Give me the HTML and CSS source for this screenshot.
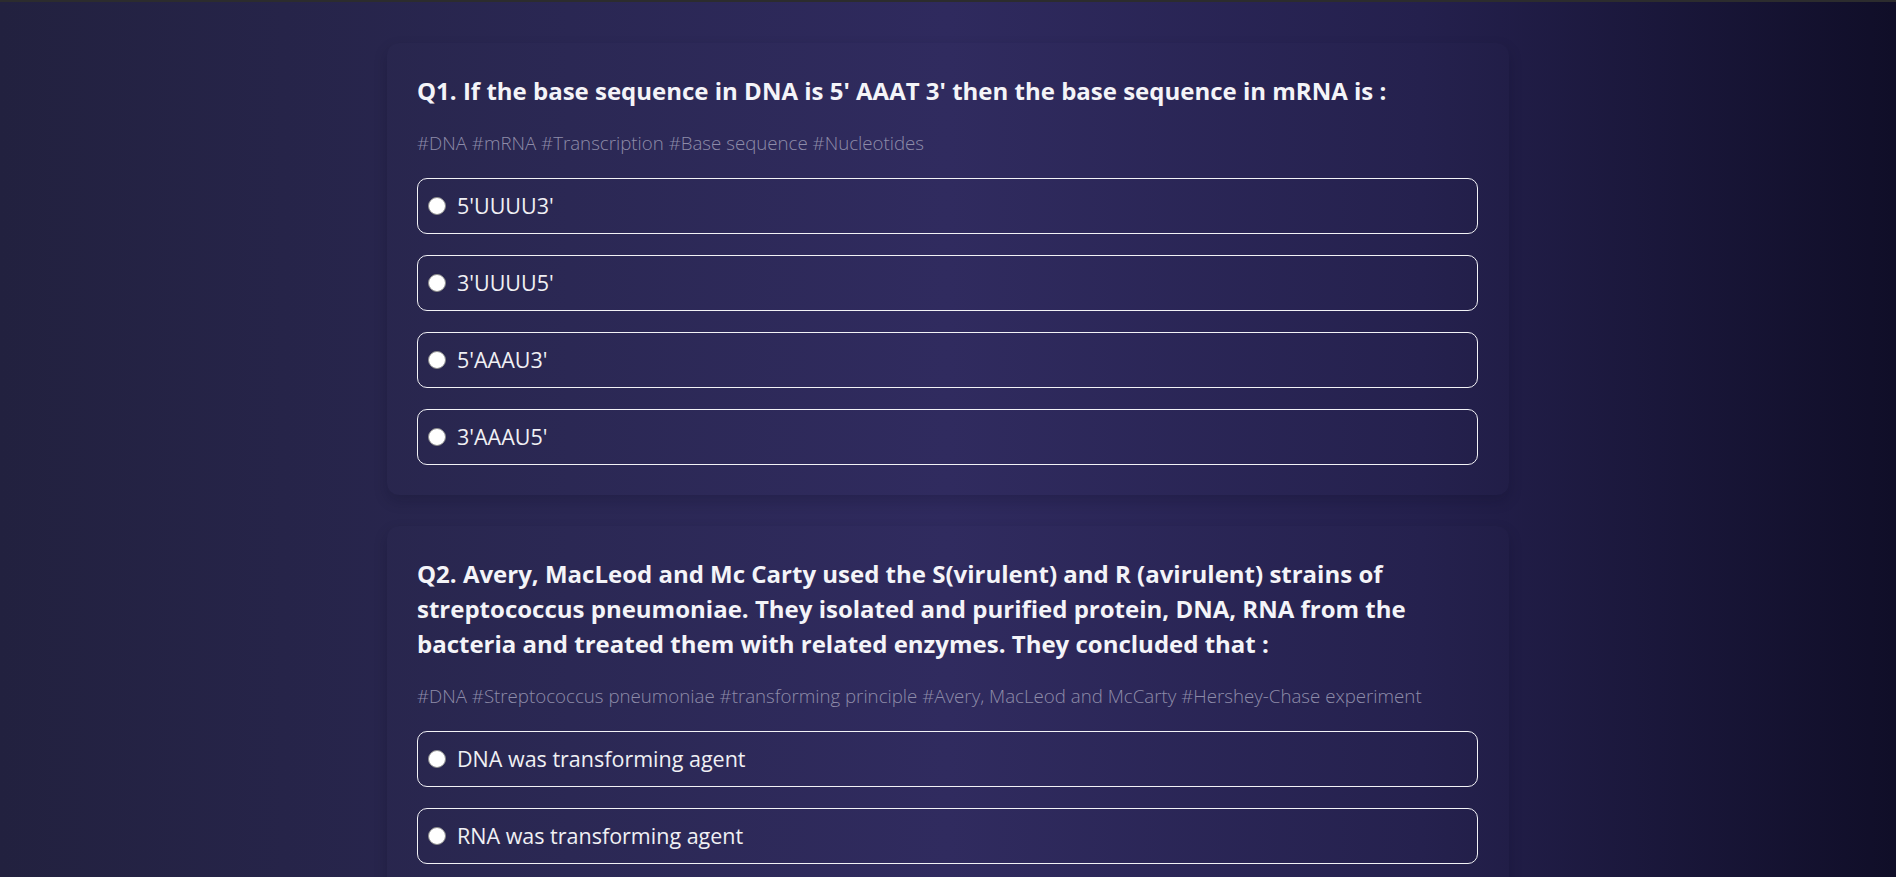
FILE: index.html
```html
<!DOCTYPE html>
<html lang="en">
<head>
<meta charset="utf-8">
<title>Quiz</title>
<link rel="stylesheet" href="styles.css">
</head>
<body>
<div class="topbar"></div>
<main class="quiz">
  <section class="card">
    <h2 class="question">Q1. If the base sequence in DNA is 5' AAAT 3' then the base sequence in mRNA is :</h2>
    <p class="tags">#DNA #mRNA #Transcription #Base sequence #Nucleotides</p>
    <ul class="options">
      <li class="option"><span class="radio"></span><span class="label">5'UUUU3'</span></li>
      <li class="option"><span class="radio"></span><span class="label">3'UUUU5'</span></li>
      <li class="option"><span class="radio"></span><span class="label">5'AAAU3'</span></li>
      <li class="option"><span class="radio"></span><span class="label">3'AAAU5'</span></li>
    </ul>
  </section>
  <section class="card">
    <h2 class="question">Q2. Avery, MacLeod and Mc Carty used the S(virulent) and R (avirulent) strains of streptococcus pneumoniae. They isolated and purified protein, DNA, RNA from the bacteria and treated them with related enzymes. They concluded that :</h2>
    <p class="tags">#DNA #Streptococcus pneumoniae #transforming principle #Avery, MacLeod and McCarty #Hershey-Chase experiment</p>
    <ul class="options">
      <li class="option"><span class="radio"></span><span class="label">DNA was transforming agent</span></li>
      <li class="option"><span class="radio"></span><span class="label">RNA was transforming agent</span></li>
      <li class="option"><span class="radio"></span><span class="label">Protein was transforming agent</span></li>
      <li class="option"><span class="radio"></span><span class="label">All are transforming agents</span></li>
    </ul>
  </section>
</main>
</body>
</html>
```

FILE: styles.css
```css
html, body {
  margin: 0;
  padding: 0;
}

body {
  min-height: 100vh;
  font-family: "Open Sans", "Lato", sans-serif;
  color: #ffffff;
  background: linear-gradient(90deg, #22213f 0%, #2a2753 30%, #2f2a5e 50%, #24204d 75%, #100e28 100%);
  background-attachment: fixed;
}

.topbar {
  height: 2px;
  background: #2c2c2e;
}

.quiz {
  width: 1122px;
  margin: 0 auto;
  padding-top: 41px;
  display: flex;
  flex-direction: column;
  gap: 31px;
}

.card {
  padding: 30px 31px 30px 30px;
  border-radius: 12px;
  background: rgba(255, 255, 255, 0.008);
  box-shadow: 0 6px 14px rgba(10, 8, 30, 0.2);
}

.question {
  margin: 0;
  font-size: 24px;
  font-weight: 700;
  line-height: 35px;
  color: #f4f4f8;
}

.tags {
  margin: 22px 0 0;
  font-size: 18.7px;
  font-weight: 300;
  line-height: 26px;
  color: #8e8ca9;
}

.options {
  list-style: none;
  margin: 22px 0 0;
  padding: 0;
  display: flex;
  flex-direction: column;
  gap: 21px;
}

.option {
  height: 56px;
  box-sizing: border-box;
  border: 1px solid #f2f2f6;
  border-radius: 10px;
  padding: 0 10px;
  display: flex;
  align-items: center;
  gap: 11px;
}

.radio {
  width: 18px;
  height: 18px;
  box-sizing: border-box;
  border-radius: 50%;
  background: #ffffff;
  border: 1px solid #8a8a8a;
  flex: none;
}

.label {
  font-size: 21.5px;
  line-height: 30px;
  color: #f0f0f4;
}
```
